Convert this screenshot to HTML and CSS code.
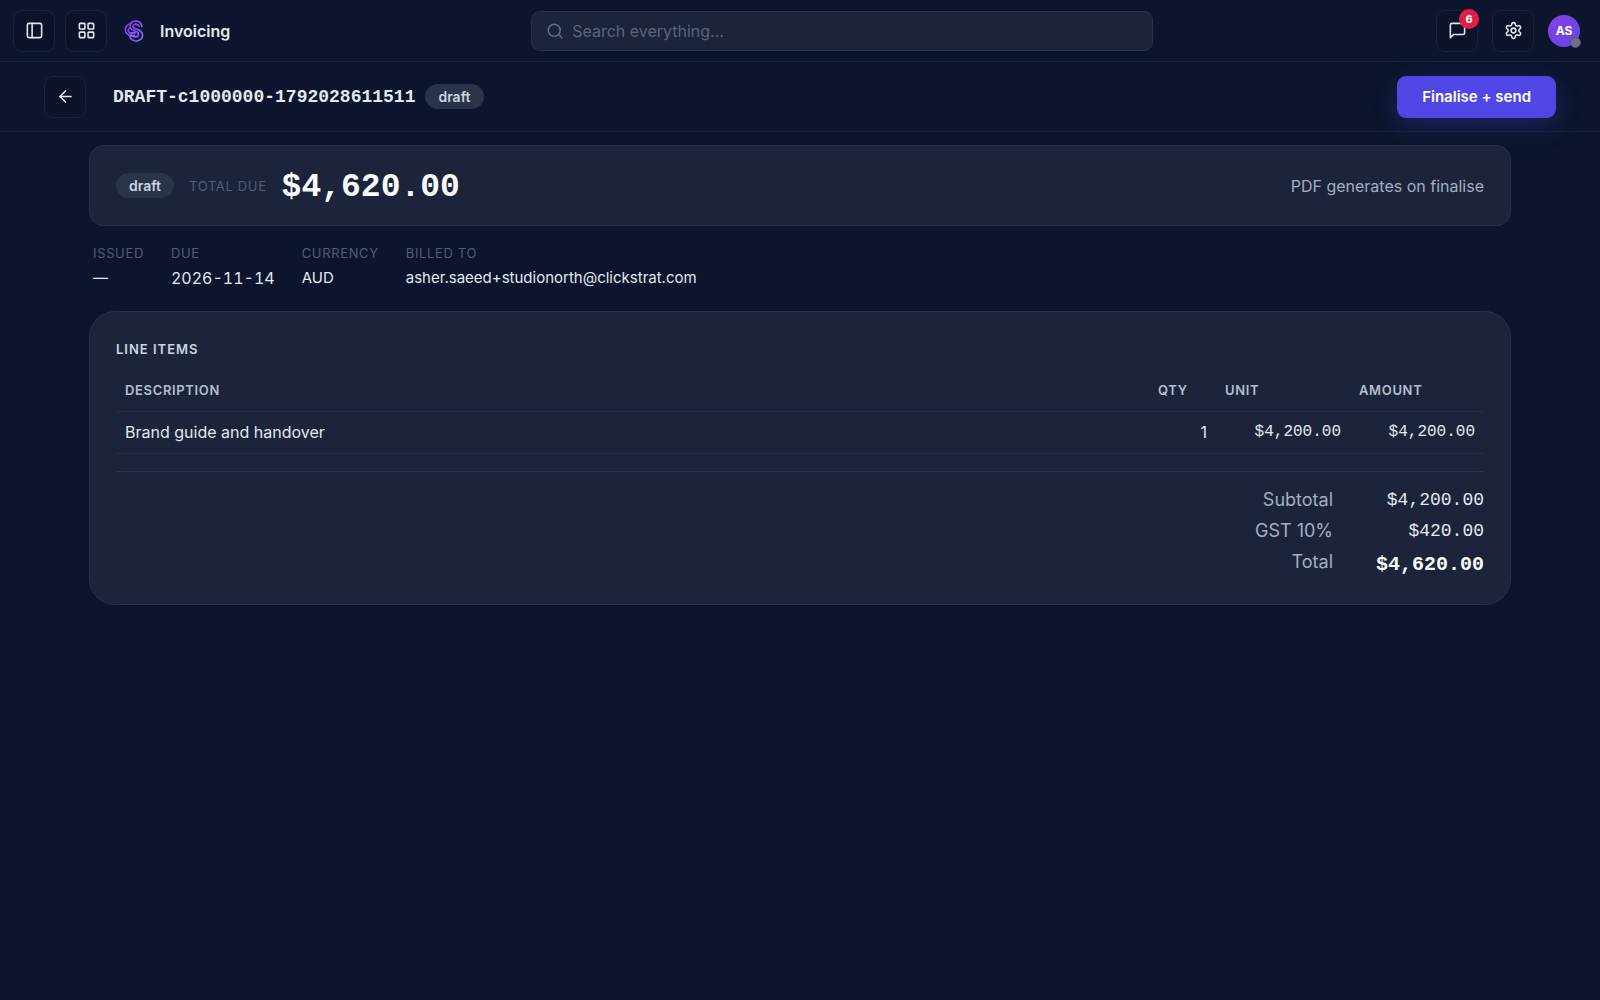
FILE: index.html
```html
<!DOCTYPE html>
<html lang="en">
<head>
    <meta charset="UTF-8">
    <meta name="viewport" content="width=device-width, initial-scale=1.0">
    <title>Invoicing</title>
    <link rel="stylesheet" href="styles.css">
</head>
<body>
    <header class="topbar">
        <button type="button" class="icon-btn" aria-label="Toggle sidebar">
            <svg class="icon" viewBox="0 0 24 24"><rect x="3" y="3" width="18" height="18" rx="2"/><path d="M9 3v18"/></svg>
        </button>
        <button type="button" class="icon-btn" aria-label="Apps">
            <svg class="icon" viewBox="0 0 24 24"><rect x="3" y="3" width="7" height="7" rx="1"/><rect x="14" y="3" width="7" height="7" rx="1"/><rect x="14" y="14" width="7" height="7" rx="1"/><rect x="3" y="14" width="7" height="7" rx="1"/></svg>
        </button>
        <a href="#" class="brand">
            <svg class="logo" viewBox="0 0 24 28">
                <defs>
                    <linearGradient id="logo-fill" x1="0" y1="0" x2="1" y2="1">
                        <stop offset="0" stop-color="#7c3aed"/>
                        <stop offset="1" stop-color="#8b6cf6"/>
                    </linearGradient>
                </defs>
                <g fill="none" stroke="url(#logo-fill)" stroke-width="2.200" stroke-linecap="round" stroke-linejoin="round">
                    <path d="M22 8C21 3 17 1 13 1.500 8 2 6 6 7.500 10c1.500 3 5 3.500 8 5 3 1.500 3 6-1 6.500-3 .5-5-1-6-3"/>
                    <path d="M18.500 8c-1-3-6-3.500-7.500-1-1 3 2 4 5 5 8 2.500 9 10 3 13.500-5 3-12 0-12.500-6"/>
                    <path d="M8 4.500C3 6 0 10 1.500 15c1.500 4 6 6 11 4.500"/>
                    <path d="M6.500 10c-3 2-2 6 1 6.500 2 .5 4-1 6 0"/>
                </g>
            </svg>
            <span>Invoicing</span>
        </a>
        <div class="search-area">
            <label class="search">
                <svg class="icon" viewBox="0 0 24 24"><circle cx="11" cy="11" r="8"/><path d="m21 21-4.3-4.3"/></svg>
                <input type="search" placeholder="Search everything..." aria-label="Search everything">
            </label>
        </div>
        <div class="actions">
            <button type="button" class="icon-btn" aria-label="Messages">
                <svg class="icon" viewBox="0 0 24 24"><path d="M21 15a2 2 0 0 1-2 2H7l-4 4V5a2 2 0 0 1 2-2h14a2 2 0 0 1 2 2z"/></svg>
                <span class="count">6</span>
            </button>
            <button type="button" class="icon-btn" aria-label="Settings">
                <svg class="icon" viewBox="0 0 24 24"><path d="M12.22 2h-.44a2 2 0 0 0-2 2v.18a2 2 0 0 1-1 1.73l-.43.25a2 2 0 0 1-2 0l-.15-.08a2 2 0 0 0-2.73.73l-.22.38a2 2 0 0 0 .73 2.73l.15.1a2 2 0 0 1 1 1.72v.51a2 2 0 0 1-1 1.74l-.15.09a2 2 0 0 0-.73 2.73l.22.38a2 2 0 0 0 2.73.73l.15-.08a2 2 0 0 1 2 0l.43.25a2 2 0 0 1 1 1.73V20a2 2 0 0 0 2 2h.44a2 2 0 0 0 2-2v-.18a2 2 0 0 1 1-1.73l.43-.25a2 2 0 0 1 2 0l.15.08a2 2 0 0 0 2.73-.73l.22-.39a2 2 0 0 0-.73-2.73l-.15-.08a2 2 0 0 1-1-1.74v-.5a2 2 0 0 1 1-1.74l.15-.09a2 2 0 0 0 .73-2.73l-.22-.38a2 2 0 0 0-2.73-.73l-.15.08a2 2 0 0 1-2 0l-.43-.25a2 2 0 0 1-1-1.73V4a2 2 0 0 0-2-2z"/><circle cx="12" cy="12" r="3"/></svg>
            </button>
            <button type="button" class="avatar" aria-label="Account">AS<span class="presence"></span></button>
        </div>
    </header>

    <div class="page-header">
        <a href="#" class="icon-btn" aria-label="Back">
            <svg class="icon icon-back" viewBox="0 0 24 24"><path d="m12 19-7-7 7-7"/><path d="M19 12H5"/></svg>
        </a>
        <h1>DRAFT-c1000000-1792028611511</h1>
        <span class="badge">draft</span>
        <button type="button" class="primary-btn">Finalise + send</button>
    </div>

    <main>
        <section class="card summary">
            <span class="badge">draft</span>
            <span class="label">Total due</span>
            <span class="summary-amount">$4,620.00</span>
            <span class="summary-note">PDF generates on finalise</span>
        </section>

        <dl class="meta">
            <div><dt class="label">Issued</dt><dd>—</dd></div>
            <div><dt class="label">Due</dt><dd class="date">2026-11-14</dd></div>
            <div><dt class="label">Currency</dt><dd>AUD</dd></div>
            <div><dt class="label">Billed to</dt><dd>asher.saeed+studionorth@clickstrat.com</dd></div>
        </dl>

        <section class="card items">
            <h2>Line items</h2>
            <table>
                <thead>
                    <tr>
                        <th>Description</th>
                        <th class="col-qty">Qty</th>
                        <th class="col-money">Unit</th>
                        <th class="col-money">Amount</th>
                    </tr>
                </thead>
                <tbody>
                    <tr>
                        <td>Brand guide and handover</td>
                        <td class="num">1</td>
                        <td class="num money">$4,200.00</td>
                        <td class="num money">$4,200.00</td>
                    </tr>
                </tbody>
            </table>
            <dl class="totals">
                <dt>Subtotal</dt><dd>$4,200.00</dd>
                <dt>GST 10%</dt><dd>$420.00</dd>
                <dt>Total</dt><dd class="grand">$4,620.00</dd>
            </dl>
        </section>
    </main>
</body>
</html>
```
FILE: styles.css
```css
* {
    box-sizing: border-box;
}
body {
    margin: 0;
    min-height: 100vh;
    background: #0c152d;
    color: #e2e8f0;
    font-family: Inter, "Liberation Sans", sans-serif;
    font-size: 16px;
    line-height: 24px;
}
h1, h2, dl, dd {
    margin: 0;
}
button, input {
    font: inherit;
    color: inherit;
}
button {
    padding: 0;
    cursor: pointer;
}
a {
    color: inherit;
    text-decoration: none;
}
.icon {
    width: 18px;
    height: 18px;
    fill: none;
    stroke: currentColor;
    stroke-width: 2;
    stroke-linecap: round;
    stroke-linejoin: round;
    flex: none;
}
.icon-btn .icon {
    width: 19px;
    height: 19px;
}

/* Top bar */
.topbar {
    display: flex;
    align-items: center;
    gap: 10px;
    height: 62px;
    padding: 0 20px 0 13px;
    border-bottom: 1px solid #1a2540;
}
.icon-btn {
    position: relative;
    display: flex;
    align-items: center;
    justify-content: center;
    width: 42px;
    height: 42px;
    flex: none;
    background: #0b132a;
    border: 1px solid #18223b;
    border-radius: 9px;
}
.brand {
    display: flex;
    align-items: center;
    gap: 16px;
    padding: 0 18px 0 7px;
    font-weight: 600;
}
.logo {
    width: 20px;
    height: 22px;
}
.search-area {
    flex: 1;
    display: flex;
    justify-content: center;
}
.search {
    display: flex;
    align-items: center;
    gap: 8px;
    width: 100%;
    max-width: 622px;
    height: 40px;
    padding: 0 14px;
    background: #1c243c;
    border: 1px solid #27314a;
    border-radius: 9px;
    color: #64708a;
}
.search input {
    flex: 1;
    min-width: 0;
    padding: 0;
    background: none;
    border: 0;
    outline: none;
}
.search input::placeholder {
    color: #59647d;
    opacity: 1;
}
.actions {
    display: flex;
    align-items: center;
    gap: 14px;
}
.count {
    position: absolute;
    top: -2px;
    right: -2px;
    width: 20px;
    height: 20px;
    border-radius: 10px;
    background: #e11d48;
    color: #fff;
    font-size: 11px;
    font-weight: 700;
    line-height: 20px;
    text-align: center;
}
.avatar {
    position: relative;
    width: 32px;
    height: 32px;
    border: 0;
    border-radius: 50%;
    background: linear-gradient(135deg, #8b3fe8, #5f46e5);
    color: #fff;
    font-size: 12px;
    font-weight: 700;
}
.presence {
    position: absolute;
    right: -1px;
    bottom: -1px;
    width: 11px;
    height: 11px;
    border: 1px solid #4b5568;
    border-radius: 50%;
    background: #6b7280;
}

/* Invoice header */
.page-header {
    display: flex;
    align-items: center;
    height: 70px;
    padding: 0 44px;
    border-bottom: 1px solid #1a2540;
}
.page-header h1 {
    margin: 0 10px 0 27px;
    font-family: "Liberation Mono", monospace;
    font-size: 18px;
    font-weight: 700;
}
.badge {
    padding: 0 13px;
    border-radius: 13px;
    background: #29334a;
    color: #cbd5e1;
    font-size: 14px;
    font-weight: 600;
    line-height: 25px;
}
.primary-btn {
    height: 42px;
    margin-left: auto;
    padding: 0 25px;
    border: 0;
    border-radius: 9px;
    background: #4f46e5;
    box-shadow: 0 8px 24px rgba(79, 70, 229, 0.25);
    color: #fff;
    font-size: 15px;
    font-weight: 600;
}

/* Content */
main {
    padding: 13px 89px;
}
.card {
    position: relative;
    background: #1c243c;
    border: 1px solid #27314a;
}
.label {
    color: #515c75;
    font-size: 13px;
    line-height: 20px;
    letter-spacing: 0.05em;
    text-transform: uppercase;
}
.summary {
    display: flex;
    align-items: center;
    gap: 15px;
    min-height: 81px;
    padding: 16px 26px;
    border-radius: 14px;
}
.summary-amount {
    padding-top: 4px;
    color: #f8fafc;
    font-family: "Liberation Mono", monospace;
    font-size: 33px;
    font-weight: 700;
    line-height: 40px;
}
.summary-note {
    margin-left: auto;
    color: #a3aec2;
}
.meta {
    display: flex;
    gap: 27px;
    padding: 17px 4px 21px;
}
.meta dd {
    padding-top: 3px;
    font-size: 15px;
}
.meta .date {
    font-size: 16px;
    font-variant-numeric: tabular-nums;
}
.items {
    padding: 26px 26px 27px;
    border-radius: 26px;
}
.items h2 {
    color: #cbd5e1;
    font-size: 13px;
    font-weight: 600;
    line-height: 22px;
    letter-spacing: 1px;
    text-transform: uppercase;
}
table {
    width: 100%;
    margin-top: 9px;
    border-collapse: collapse;
    table-layout: fixed;
}
th, td {
    height: 42px;
    padding: 0 9px;
    border-bottom: 1px solid #232d46;
    text-align: left;
}
th {
    color: #b4bfd0;
    font-size: 13px;
    font-weight: 600;
    letter-spacing: 0.05em;
    text-transform: uppercase;
}
.col-qty {
    width: 67px;
}
.col-money {
    width: 134px;
}
.num {
    text-align: right;
}
.money {
    font-family: "Liberation Mono", monospace;
}
.totals {
    display: grid;
    grid-template-columns: 1fr 151px;
    row-gap: 7px;
    margin-top: 17px;
    padding-top: 16px;
    border-top: 1px solid #2a344c;
    font-size: 18px;
    text-align: right;
}
.totals dt {
    color: #a3aec2;
}
.totals dd {
    font-family: "Liberation Mono", monospace;
}
.totals .grand {
    padding-top: 3px;
    color: #f8fafc;
    font-size: 20px;
    font-weight: 700;
}

@media (max-width: 900px) {
    main {
        padding: 13px 16px;
    }
    .page-header {
        padding: 0 16px;
    }
    .meta, .summary {
        flex-wrap: wrap;
    }
}
```
